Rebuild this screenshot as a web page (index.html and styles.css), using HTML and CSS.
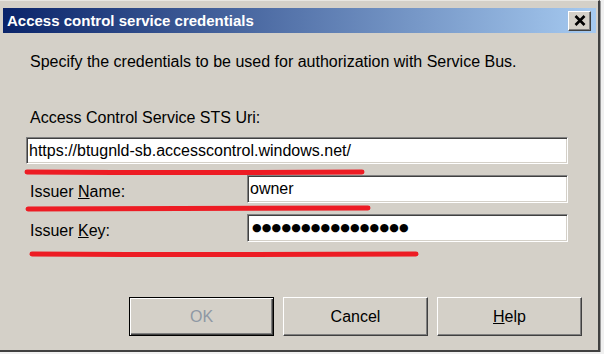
FILE: index.html
```html
<!DOCTYPE html>
<html>
<head>
    <title>Access control service credentials</title>
    <link rel="stylesheet" href="styles.css">
</head>
<body>
    <div class="window">
        <div class="titlebar">
            <span class="title">Access control service credentials</span>
            <button class="close-button" aria-label="Close">
                <svg width="12" height="11" viewBox="0 0 12 11">
                    <path d="M1.5 1 L10.5 10 M10.5 1 L1.5 10" stroke="#000" stroke-width="2.6" fill="none"/>
                </svg>
            </button>
        </div>
        <div class="content">
            <div class="form">
                <p class="intro">Specify the credentials to be used for authorization with Service Bus.</p>
                <label class="label uri-label">Access Control Service STS Uri:</label>
                <div class="textbox">https://btugnld-sb.accesscontrol.windows.net/</div>
                <div class="row">
                    <label class="label">Issuer <u>N</u>ame:</label>
                    <div class="textbox">owner</div>
                </div>
                <div class="row">
                    <label class="label">Issuer <u>K</u>ey:</label>
                    <div class="textbox dots">●●●●●●●●●●●●●●●●</div>
                </div>
            </div>
            <div class="buttons">
                <button class="button default" disabled>OK</button>
                <button class="button">Cancel</button>
                <button class="button"><u>H</u>elp</button>
            </div>
        </div>

        <!-- red marker strokes drawn over the dialog -->
        <svg class="marks" width="600" height="352" viewBox="0 0 600 352">
            <g stroke="#ed1c24" stroke-width="5" stroke-linecap="round" fill="none">
                <path d="M27 171 Q200 172 362 171"/>
                <path d="M28 208 Q200 208 368 207"/>
                <path d="M32 253 Q220 254 416 253"/>
            </g>
        </svg>
    </div>
</body>
</html>
```

FILE: styles.css
```css
body {
    margin: 0;
    background: #f0f0f0;
    font-family: 'Liberation Sans', Arial, sans-serif;
    font-size: 16px;
    color: #000;
}
.window {
    position: relative;
    box-sizing: border-box;
    width: 600px;
    height: 352px;
    padding: 8px 2px 0 3px;
    background: #d4d0c8;
    border-top: 1px solid #e8e6e1;
    border-right: 2px solid #404040;
    border-bottom: 2px solid #404040;
    box-shadow: 1px 1px 0 #9a9a9a;
}
.titlebar {
    display: flex;
    align-items: center;
    justify-content: space-between;
    height: 25px;
    margin-top: -1px;
    padding: 0 5px 0 4px;
    background: linear-gradient(to right, #0a246a, #a6caf0);
}
.title {
    color: #fff;
    font-weight: bold;
    font-size: 15px;
}
.close-button {
    display: flex;
    align-items: center;
    justify-content: center;
    flex-shrink: 0;
    box-sizing: border-box;
    width: 23px;
    height: 20px;
    padding: 0;
    background: #d4d0c8;
    border: 1px solid;
    border-color: #fff #404040 #404040 #fff;
    box-shadow: inset -1px -1px 0 #808080;
}
.content {
    display: flex;
    flex-direction: column;
    padding: 0 14px 0 23px;
}
.form {
    display: flex;
    flex-direction: column;
    margin-right: 14px;
}
.intro {
    margin: 20px 0 0 4px;
    line-height: 18px;
}
.label {
    line-height: 18px;
    padding-left: 4px;
}
.uri-label {
    margin: 38px 0 10px 0;
}
.textbox {
    box-sizing: border-box;
    flex: 1;
    height: 28px;
    padding: 1px 2px 0 2px;
    line-height: 24px;
    background: #fff;
    border: 1px solid;
    border-color: #808080 #fff #fff #808080;
    box-shadow: inset 1px 1px 0 #404040, inset -1px -1px 0 #d4d0c8;
    white-space: nowrap;
}
.row {
    display: flex;
    align-items: center;
    margin-top: 11px;
}
.row .label {
    width: 217px;
    padding-top: 6px;
}
.dots {
    font-family: 'DejaVu Sans', sans-serif;
    font-size: 11px;
    letter-spacing: 0.2px;
    padding-left: 4px;
}
.buttons {
    display: flex;
    justify-content: flex-end;
    gap: 9px;
    margin-top: 55px;
}
.button {
    box-sizing: border-box;
    width: 145px;
    height: 39px;
    padding: 0;
    font-family: 'Liberation Sans', Arial, sans-serif;
    font-size: 16px;
    color: #000;
    background: #d4d0c8;
    border: 1px solid;
    border-color: #fff #404040 #404040 #fff;
    box-shadow: inset -1px -1px 0 #808080;
}
.button.default {
    border: 1px solid #000;
    box-shadow: inset 1px 1px 0 #fff, inset -1px -1px 0 #404040, inset -2px -2px 0 #808080;
    color: #8e98a4;
}
.marks {
    position: absolute;
    left: 0;
    top: 0;
    pointer-events: none;
}
```
